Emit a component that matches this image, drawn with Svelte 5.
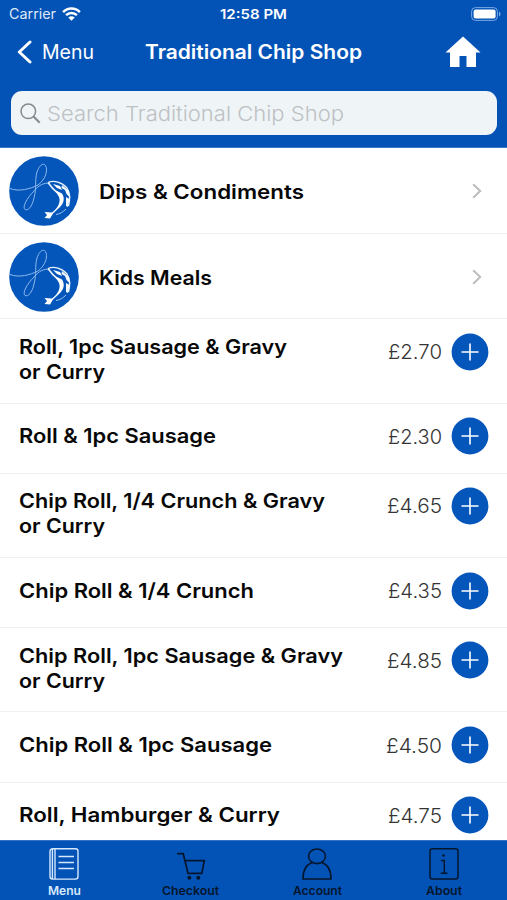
<script>
  const categories = [
    { name: 'Dips & Condiments', width: 205 },
    { name: 'Kids Meals', width: 113 },
  ];
  const items = [
    { lines: [['Roll, 1pc Sausage & Gravy', 268], ['or Curry', 86]], price: '£2.70', pw: 54 },
    { lines: [['Roll & 1pc Sausage', 197]], price: '£2.30', pw: 54 },
    { lines: [['Chip Roll, 1/4 Crunch & Gravy', 306], ['or Curry', 86]], price: '£4.65', pw: 55 },
    { lines: [['Chip Roll & 1/4 Crunch', 235]], price: '£4.35', pw: 54 },
    { lines: [['Chip Roll, 1pc Sausage & Gravy', 324], ['or Curry', 86]], price: '£4.85', pw: 55 },
    { lines: [['Chip Roll & 1pc Sausage', 253]], price: '£4.50', pw: 56 },
    { lines: [['Roll, Hamburger & Curry', 261]], price: '£4.75', pw: 54 },
  ];

  // Widens or narrows a label's letterforms so that it spans the given width.
  function fit(node, width) {
    const natural = node.getBoundingClientRect().width;
    node.style.display = 'inline-block';
    node.style.width = `${width}px`;
    node.style.transformOrigin = '0 50%';
    node.style.transform = `scaleX(${width / natural})`;
  }
</script>

<div class="app">
  <header>
    <div class="status">
      <div class="carrier">
        <span use:fit={47}>Carrier</span>
        <svg width="19" height="14" viewBox="0 0 19 14" fill="none" stroke="#fff" stroke-width="2.5">
          <path d="M1.1 5.1C5.8.4 13.2.4 17.9 5.1M4.1 8.2c3-3 7.8-3 10.8 0" />
          <path d="M9.5 13.8 6.3 10.6c1.8-1.8 4.6-1.8 6.4 0Z" fill="#fff" stroke="none" />
        </svg>
      </div>
      <span class="time" use:fit={67}>12:58 PM</span>
      <svg class="battery" width="30" height="14" viewBox="0 0 30 14">
        <rect x=".6" y=".6" width="25.8" height="12.8" rx="3.8" fill="none" stroke="#78a7e2" />
        <rect x="2.6" y="2.5" width="22" height="9" rx="2" fill="#fff" />
        <path d="M28 4.5c2 .7 2 4.3 0 5Z" fill="#78a7e2" />
      </svg>
    </div>
    <div class="nav">
      <div class="back">
        <svg width="15" height="24" viewBox="0 0 15 24" fill="none" stroke="#fff" stroke-width="3" stroke-linecap="round" stroke-linejoin="round"><path d="M13 2 2.3 12 13 22" /></svg>
        <span use:fit={52}>Menu</span>
      </div>
      <h1><span use:fit={217}>Traditional Chip Shop</span></h1>
      <svg class="home" width="36" height="32" viewBox="0 0 36 32" fill="#fff"><path d="M18 .5 35.5 16.5H31V31H21.5V20H14.5V31H5V16.5H.5Z" /></svg>
    </div>
    <div class="search">
      <svg width="21" height="21" viewBox="0 0 21 21" fill="none" stroke="#858a90" stroke-width="1.5"><circle cx="8.3" cy="8.3" r="7.3" /><path d="m13.5 13.5 6.2 6.2" stroke-width="2" /></svg>
      <span use:fit={297}>Search Traditional Chip Shop</span>
    </div>
  </header>

  <main>
    {#each categories as c}
      <div class="category">
        <svg class="logo" width="70" height="70" viewBox="0 0 70 70" fill="none">
          <circle cx="35" cy="35" r="34.8" fill="#0556bb" />
          <path d="M1 32.500C10 36 21 33 29 29C37 23 39 14 36.500 9.500C34 6 30 10 28 16C25.500 25 28 31 25 42C23 51 19 55 16 53.500C13 51 18 42 25 35C30 29 34 27 41 27" stroke="#8cb9ec" stroke-width="1" />
          <path d="M39 26.500C45 24 53 26 58 32C62 38 61 44 59.500 50" stroke="#e9f2fc" stroke-width="1.300" />
          <path d="M53 29L60 35L61.500 42L57.500 38L56 34L52.500 32ZM57 41L60.500 43L59 51L57 50Z" fill="#f2f8ff" />
          <path d="M39 26.500C42 31 45 34 49 37.500" stroke="#e9f2fc" stroke-width="1.500" />
          <path d="M44 28L51 30L53 34L48 32ZM46 34L53 37.500C56 42 55 47 51 51L44 57.500L41 62.500L35.500 62L38 59L35.500 56L43 56.500C49 52 52 46 50 41Z" fill="#fff" />
          <path d="M47 58.500C51 58 54 56 57 53" stroke="#9bc1ed" />
        </svg>
        <span class="title" use:fit={c.width}>{c.name}</span>
        <svg class="chevron" width="10" height="16" viewBox="0 0 10 16" fill="none" stroke="#bdbdbf" stroke-width="2"><path d="m1.2 1.2 7 6.8-7 6.8" /></svg>
      </div>
    {/each}
    {#each items as item}
      <div class="item" class:tall={item.lines.length > 1}>
        <div class="name">
          {#each item.lines as [text, width]}
            <div><span use:fit={width}>{text}</span></div>
          {/each}
        </div>
        <span class="price" use:fit={item.pw}>{item.price}</span>
        <svg class="add" width="38" height="38" viewBox="0 0 38 38"><circle cx="19" cy="19" r="18.4" fill="#0556bb" /><path d="M19 10.5v17M10.5 19h17" stroke="#fff" stroke-width="1.6" /></svg>
      </div>
    {/each}
  </main>

  <footer>
    <div class="tab active">
      <svg width="32" height="34" viewBox="0 0 32 34" fill="none" stroke="currentColor" stroke-width="1.4"><rect x="2" y="1.7" width="28" height="30.4" rx="2.5" /><path d="M4.4 2v30M7 2v30M10.5 9.5H26M10.5 15.5H26M10.5 21.5H26" /></svg>
      <span use:fit={33}>Menu</span>
    </div>
    <div class="tab">
      <svg width="32" height="34" viewBox="0 0 32 34" fill="none" stroke="currentColor" stroke-width="1.7"><path d="M2 6.7h6.2L13 26.3h13.8L29.3 13.6H9.8" /><circle cx="14.4" cy="30.7" r="2" fill="currentColor" stroke="none" /><circle cx="23.3" cy="30.7" r="2" fill="currentColor" stroke="none" /></svg>
      <span use:fit={57}>Checkout</span>
    </div>
    <div class="tab">
      <svg width="32" height="34" viewBox="0 0 32 34" fill="none" stroke="currentColor" stroke-width="1.6"><ellipse cx="16" cy="9.3" rx="8.5" ry="7.3" /><path d="M11.5 15.6C5 17.5 2 23 2 32H30C30 23 27 17.5 20.5 15.6" /></svg>
      <span use:fit={49}>Account</span>
    </div>
    <div class="tab">
      <svg width="32" height="34" viewBox="0 0 32 34" fill="none" stroke="currentColor" stroke-width="1.5"><rect x="2" y="1.7" width="28" height="30.4" rx="2.5" /><path d="M13 13.5h3.3v12.7M12.7 26.3h6.8" /><circle cx="15.5" cy="8.5" r="1.3" fill="currentColor" stroke="none" /></svg>
      <span use:fit={36}>About</span>
    </div>
  </footer>
</div>

<style>
  .app {
    width: 507px;
    height: 900px;
    display: flex;
    flex-direction: column;
    overflow: hidden;
    background: #fff;
    font-family: Inter, 'Liberation Sans', sans-serif;
    color: #080808;
    white-space: nowrap;
  }
  svg { display: block; flex: none; }
  header {
    flex: none;
    box-sizing: border-box;
    height: 148px;
    background: #0353b7;
    color: #fff;
    border-bottom: 1px solid #3b7bca;
  }
  .status, .nav {
    display: grid;
    grid-template-columns: 1fr auto 1fr;
    align-items: center;
  }
  .status {
    height: 27px;
    padding: 0 6px 0 9px;
    font-size: 14px;
  }
  .carrier { display: flex; align-items: center; gap: 6px; color: #dfeaf8; }
  .time { margin-right: 3px; font-weight: 600; font-size: 13.5px; }
  .battery, .home { justify-self: end; }
  .nav { height: 50px; padding: 0 26px 0 17px; }
  .back { display: flex; align-items: center; gap: 10px; font-size: 20px; line-height: 24px; }
  .back svg, .back span, .home { margin-bottom: 1px; }
  h1 { margin: 0 0 0 9px; font-size: 19.5px; font-weight: 560; line-height: 51px; }
  .search {
    display: flex;
    align-items: center;
    gap: 6px;
    box-sizing: border-box;
    height: 44px;
    margin: 14px 10px 0 11px;
    padding-left: 9px;
    border-radius: 11px;
    background: #eff4f7;
    color: #bec1c4;
    font-size: 20.5px;
    font-weight: 300;
  }
  main { flex: 1; min-height: 0; overflow: hidden; }
  .category, .item {
    box-sizing: border-box;
    display: flex;
    align-items: center;
    border-bottom: 1px solid #f0f0f1;
  }
  .category { height: 85.7px; padding: 2px 25px 0 9px; }
  .title { margin-left: 20px; font-size: 20.3px; font-weight: 560; }
  .chevron { margin-left: auto; }
  .item { height: 70.1px; padding: 0 18px 4px 19px; }
  .tall { height: 84.3px; padding-bottom: 3px; }
  .name { flex: 1; padding-bottom: 1px; font-size: 20.3px; font-weight: 560; line-height: 25px; }
  .tall .price, .tall .add { margin-bottom: 16px; }
  .price { margin-right: 9px; color: #343434; font-size: 20.3px; font-weight: 300; }
  footer {
    flex: none;
    display: flex;
    box-sizing: border-box;
    height: 60px;
    padding: 6px 0 0 1px;
    background: #0353b7;
    border-top: 1px solid #3372c3;
  }
  .tab {
    flex: 1;
    display: flex;
    flex-direction: column;
    align-items: center;
    gap: 2px;
    color: #04162d;
    font-size: 11.8px;
    font-weight: 600;
    line-height: 17px;
  }
  .active { color: #d6e8fc; }
</style>
